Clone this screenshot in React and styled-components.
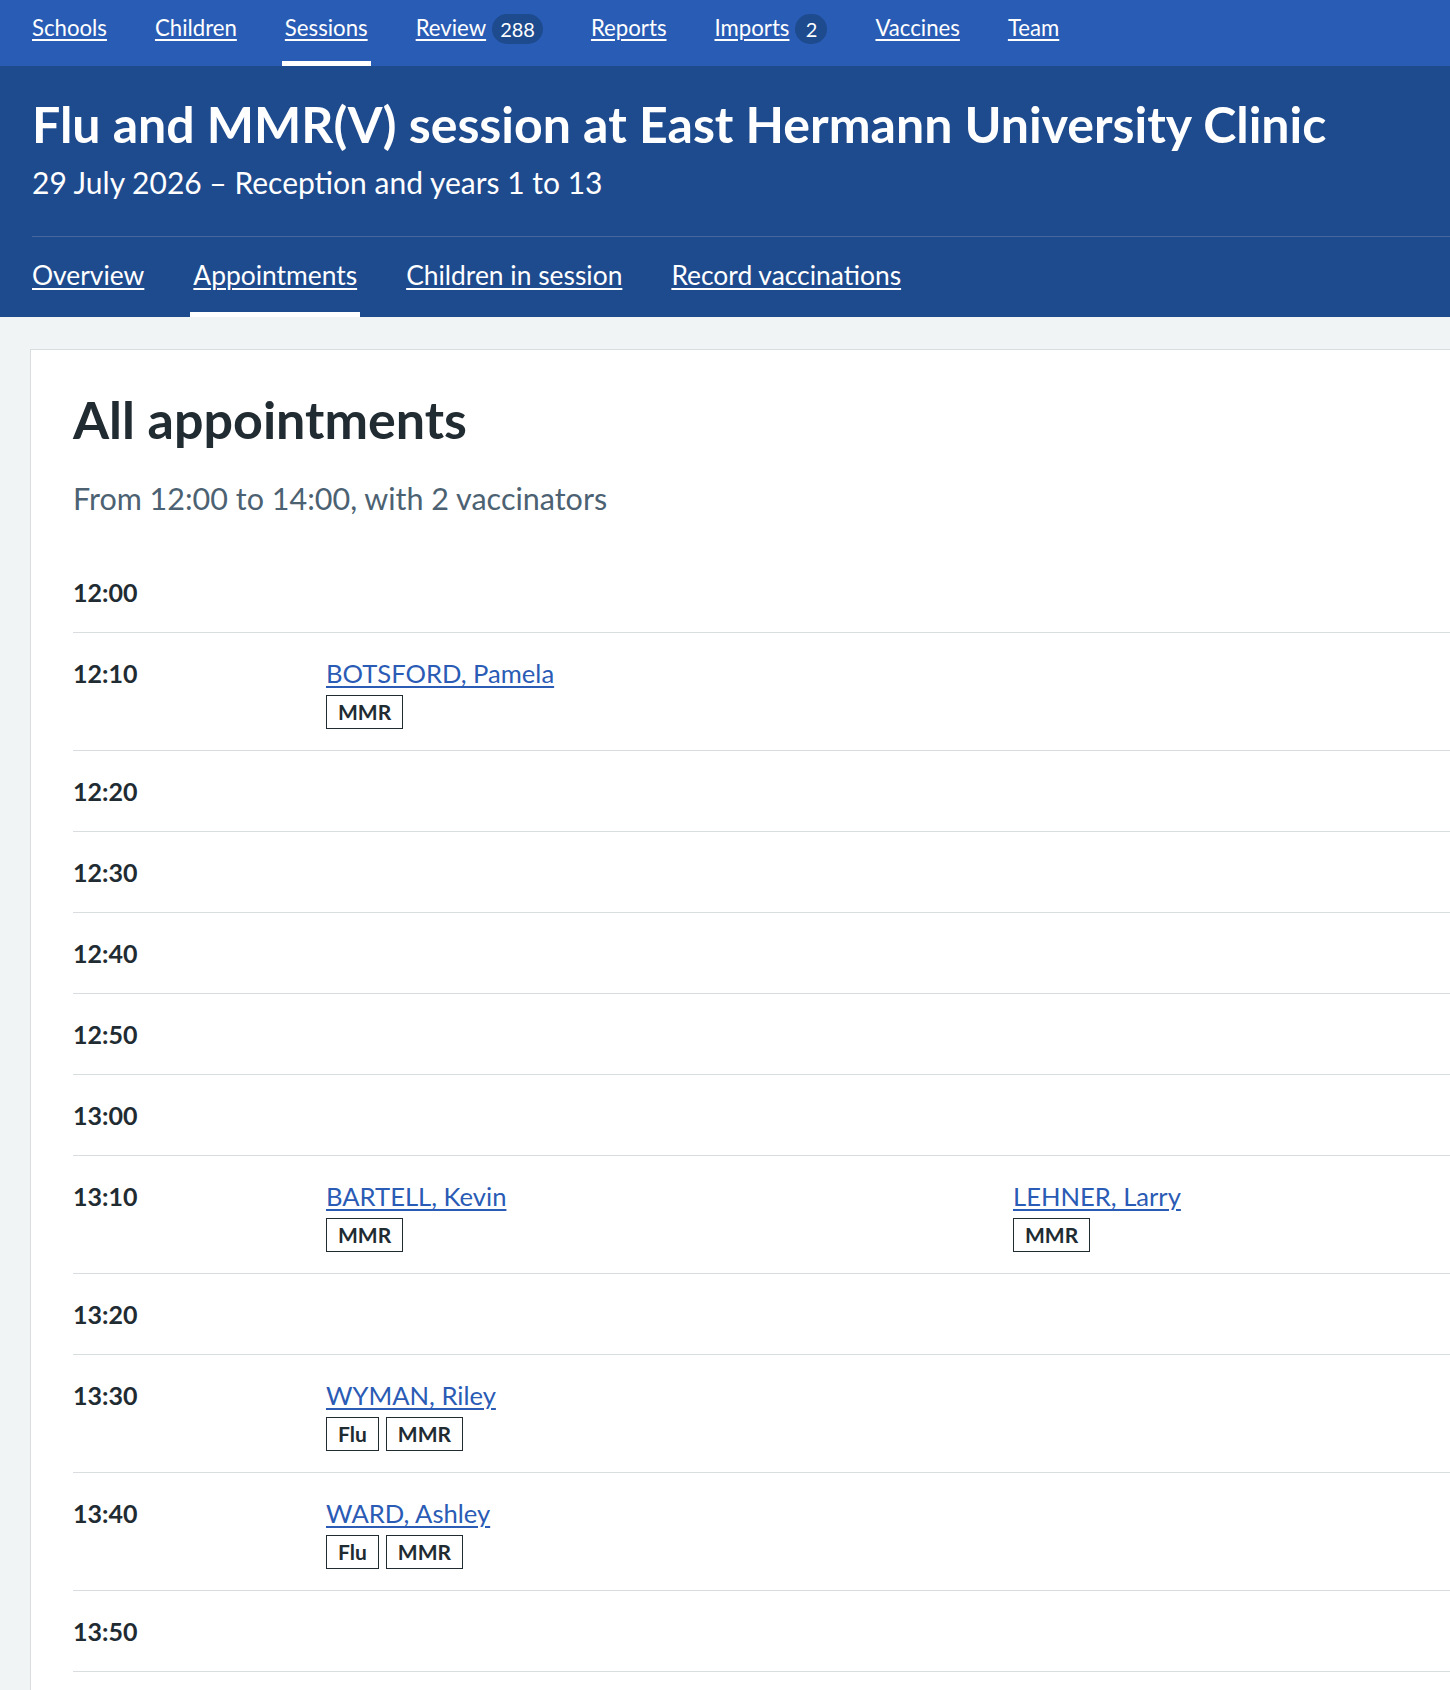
import styled, { createGlobalStyle } from "styled-components";

const GlobalStyle = createGlobalStyle`
  html, body {
    margin: 0;
    padding: 0;
    overflow-x: hidden;
  }
  body {
    background: #f0f4f5;
    color: #212b32;
    font-family: Lato, "Noto Sans", "Liberation Sans", sans-serif;
  }
`;

const topLinks = [
  { label: "Schools" },
  { label: "Children" },
  { label: "Sessions", active: true },
  { label: "Review", count: 288 },
  { label: "Reports" },
  { label: "Imports", count: 2 },
  { label: "Vaccines" },
  { label: "Team" },
];

const subLinks = [
  { label: "Overview" },
  { label: "Appointments", active: true },
  { label: "Children in session" },
  { label: "Record vaccinations" },
];

const slots = [
  { time: "12:00", cols: [] },
  { time: "12:10", cols: [{ name: "BOTSFORD, Pamela", tags: ["MMR"] }] },
  { time: "12:20", cols: [] },
  { time: "12:30", cols: [] },
  { time: "12:40", cols: [] },
  { time: "12:50", cols: [] },
  { time: "13:00", cols: [] },
  {
    time: "13:10",
    cols: [
      { name: "BARTELL, Kevin", tags: ["MMR"] },
      { name: "LEHNER, Larry", tags: ["MMR"] },
    ],
  },
  { time: "13:20", cols: [] },
  { time: "13:30", cols: [{ name: "WYMAN, Riley", tags: ["Flu", "MMR"] }] },
  { time: "13:40", cols: [{ name: "WARD, Ashley", tags: ["Flu", "MMR"] }] },
  { time: "13:50", cols: [] },
];

function App() {
  return (
    <>
      <GlobalStyle />
      <TopNav>
        {topLinks.map((l) => (
          <NavItem key={l.label} $active={l.active}>
            <TopLink href="#">{l.label}</TopLink>
            {l.count !== undefined && <Count>{l.count}</Count>}
          </NavItem>
        ))}
      </TopNav>

      <Header>
        <Title>Flu and MMR(V) session at East Hermann University Clinic</Title>
        <Caption>29 July 2026 – Reception and years 1 to 13</Caption>
        <SubNav>
          {subLinks.map((l) => (
            <SubLink key={l.label} href="#" $active={l.active}>
              {l.label}
            </SubLink>
          ))}
        </SubNav>
      </Header>

      <Main>
        <Card>
          <Heading>All appointments</Heading>
          <Lead>From 12:00 to 14:00, with 2 vaccinators</Lead>
          <Schedule>
            {slots.map((slot) => (
              <Row key={slot.time}>
                <Time>{slot.time}</Time>
                {[0, 1].map((i) => {
                  const a = slot.cols[i];
                  return (
                    <Cell key={i}>
                      {a && (
                        <>
                          <NameLink href="#">{a.name}</NameLink>
                          <Tags>
                            {a.tags.map((t) => (
                              <Tag key={t}>{t}</Tag>
                            ))}
                          </Tags>
                        </>
                      )}
                    </Cell>
                  );
                })}
              </Row>
            ))}
          </Schedule>
        </Card>
      </Main>
    </>
  );
}

const TopNav = styled.nav`
  display: flex;
  gap: 42px;
  height: 66px;
  padding-left: 29px;
  background: #295cb5;
  box-sizing: border-box;
`;

const NavItem = styled.div`
  display: flex;
  align-items: flex-start;
  gap: 6px;
  padding: 10px 3px 0;
  box-sizing: border-box;
  border-bottom: 5px solid ${(p) => (p.$active ? "#ffffff" : "transparent")};
`;

const TopLink = styled.a`
  color: #ffffff;
  font-size: 22.2px;
  line-height: 35px;
  text-decoration: underline;
  text-decoration-thickness: 2px;
  text-underline-offset: 3px;
`;

const Count = styled.span`
  margin-top: 4px;
  min-width: 32px;
  height: 30px;
  padding: 0 8px;
  box-sizing: border-box;
  border-radius: 15px;
  background: #1e4a8e;
  color: #ffffff;
  font-size: 20px;
  line-height: 30px;
  text-align: center;
`;

const Header = styled.header`
  background: #1e4a8e;
  color: #ffffff;
  padding: 28px 0 0 32px;
`;

const Title = styled.h1`
  margin: 0;
  font-size: 50px;
  font-weight: 700;
  line-height: 1.2;
`;

const Caption = styled.p`
  margin: 9px 0 0;
  font-size: 30px;
  line-height: 38px;
  padding-bottom: 35px;
  border-bottom: 1px solid #46679f;
`;

const SubNav = styled.nav`
  display: flex;
  gap: 43px;
  margin-left: -3px;
`;

const SubLink = styled.a`
  padding: 19px 3px 17px;
  color: #ffffff;
  font-size: 26.4px;
  line-height: 39px;
  text-decoration: underline;
  text-decoration-thickness: 2px;
  text-underline-offset: 3px;
  border-bottom: 5px solid ${(p) => (p.$active ? "#ffffff" : "transparent")};
`;

const Main = styled.main`
  padding: 32px 0 0 30px;
`;

const Card = styled.section`
  width: 1712px;
  box-sizing: border-box;
  background: #ffffff;
  border: 1px solid #d8dde0;
  padding: 38px 42px 40px 42px;
`;

const Heading = styled.h2`
  margin: 0;
  font-size: 52px;
  font-weight: 700;
  line-height: 62px;
`;

const Lead = styled.p`
  margin: 27px 0 0;
  color: #4c6272;
  font-size: 30.5px;
  line-height: 42px;
`;

const Schedule = styled.div`
  margin-top: 33px;
`;

const Row = styled.div`
  display: grid;
  grid-template-columns: 253px 687px 687px;
  border-bottom: 1px solid #d8dde0;
`;

const Time = styled.div`
  padding: 21px 0 20px;
  font-size: 25px;
  font-weight: 700;
  line-height: 39px;
`;

const Cell = styled.div`
  padding: 21px 0 20px;
  font-size: 25.6px;
  line-height: 39px;
`;

const NameLink = styled.a`
  color: #2a5bb5;
  text-decoration: underline;
  text-decoration-thickness: 2px;
  text-underline-offset: 3px;
`;

const Tags = styled.div`
  display: flex;
  gap: 7px;
  margin: 2px 0 1px;
`;

const Tag = styled.span`
  display: inline-block;
  height: 34px;
  padding: 0 11px;
  box-sizing: border-box;
  border: 1px solid #212b32;
  font-size: 21px;
  font-weight: 700;
  line-height: 32px;
`;

export default App;
